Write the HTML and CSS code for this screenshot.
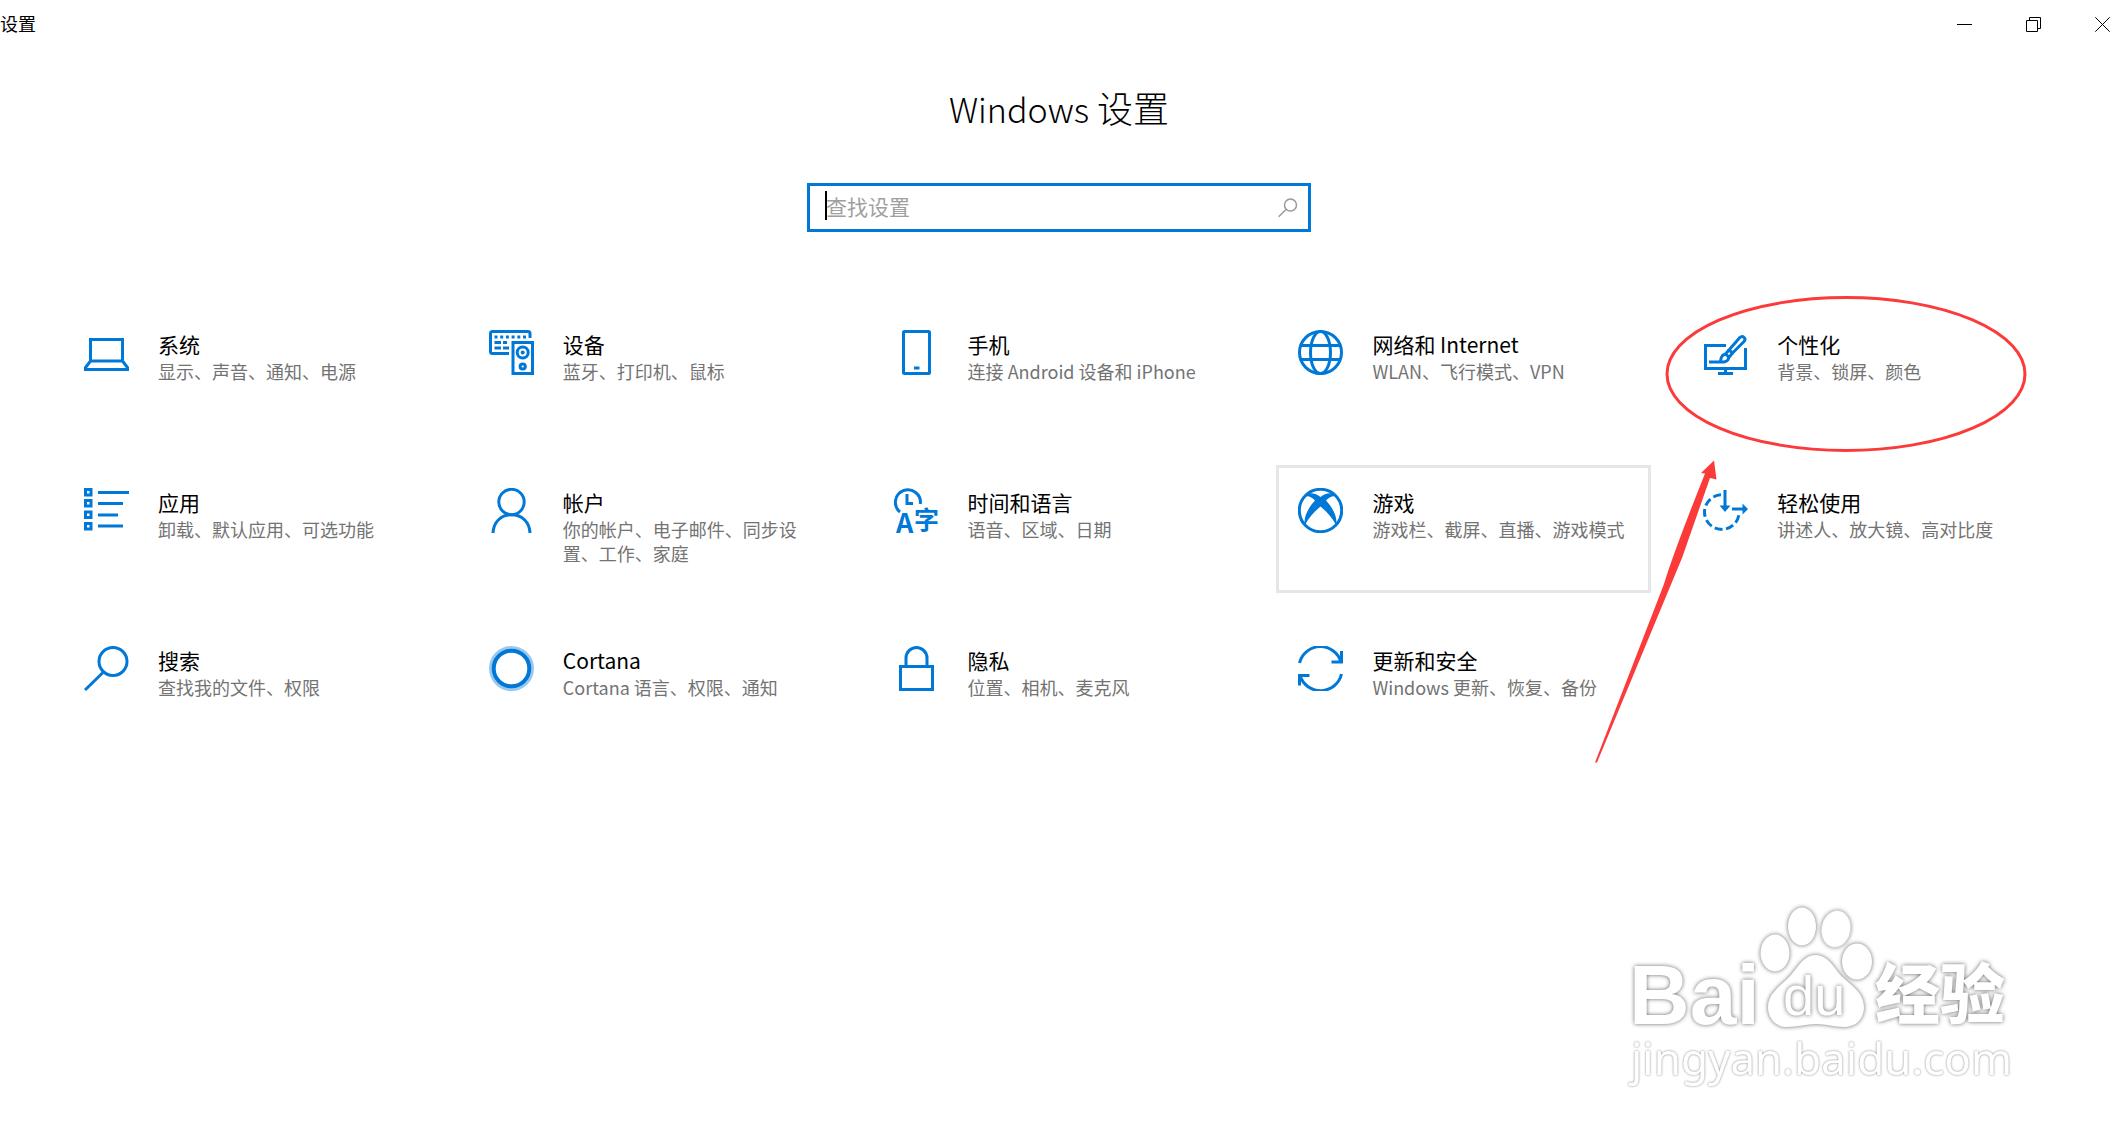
FILE: index.html
```html
<!DOCTYPE html>
<html lang="zh-CN">
<head>
<meta charset="utf-8">
<meta name="viewport" content="width=device-width, initial-scale=1">
<title>设置</title>
<link rel="stylesheet" href="styles.css">
</head>
<body>
<header class="titlebar">
  <span class="titlebar-name">设置</span>
  <div class="window-controls">
    <button type="button" aria-label="最小化"><svg viewBox="0 0 15 15"><path d="M0 7.500H15"/></svg></button>
    <button type="button" aria-label="还原"><svg viewBox="0 0 15 15"><path d="M.5 3.500H11.500V14.500H.5ZM3.500 3.500V.5H14.500V11.500H11.500"/></svg></button>
    <button type="button" aria-label="关闭"><svg viewBox="0 0 15 15"><path d="M.3.3 14.700 14.700M14.700.3.3 14.700"/></svg></button>
  </div>
</header>

<main class="settings">
  <h1 class="page-title"><span class="latin">Windows</span> 设置</h1>
  <form class="search" role="search">
    <input class="search-input" type="text" placeholder="查找设置" aria-label="查找设置">
    <span class="caret"></span>
    <button class="search-button" type="button" aria-label="搜索"><svg viewBox="0 0 20 20"><circle cx="12.500" cy="7" r="6"/><path d="M8 11.500.7 18.700"/></svg></button>
  </form>

  <nav class="tiles" aria-label="设置类别">
    <a class="tile" href="#system">
      <svg class="icon" viewBox="0 0 45 45"><path d="M6.500 30V9.500H38.500V30M6.500 31H38.500L43.500 37.500V39.500H1.500V37.500Z"/></svg>
      <span class="tile-text"><span class="tile-name">系统</span><span class="tile-desc">显示、声音、通知、电源</span></span>
    </a>
    <a class="tile" href="#devices">
      <svg class="icon" viewBox="0 0 45 45"><path d="M20 23.500H3.500Q1.500 23.500 1.500 21.500V3.500Q1.500 1.500 3.500 1.500H39Q41 1.500 41 3.500V8"/><path d="M5.500 7H37" stroke-dasharray="3 2.700"/><path d="M5.500 12.500H12M14 12.500H18M5.500 18H12M14 18H20"/><path d="M24 12.500H43.500V43.500H24Z"/><circle cx="33.700" cy="22.500" r="5.500"/><g class="solid"><circle cx="33.700" cy="22.500" r="2"/></g><circle cx="33.700" cy="36.500" r="2.600"/></svg>
      <span class="tile-text"><span class="tile-name">设备</span><span class="tile-desc">蓝牙、打印机、鼠标</span></span>
    </a>
    <a class="tile" href="#phone">
      <svg class="icon" viewBox="0 0 45 45"><rect x="9.500" y="1.500" width="26" height="42" rx="1"/><path d="M20 38H25.500"/></svg>
      <span class="tile-text"><span class="tile-name">手机</span><span class="tile-desc">连接 Android 设备和 iPhone</span></span>
    </a>
    <a class="tile" href="#network">
      <svg class="icon" viewBox="0 0 45 45"><circle cx="22.500" cy="22.500" r="21"/><ellipse cx="22.500" cy="22.500" rx="10" ry="21"/><path d="M3 15.500H42M3 29.500H42"/></svg>
      <span class="tile-text"><span class="tile-name">网络和 Internet</span><span class="tile-desc">WLAN、飞行模式、VPN</span></span>
    </a>
    <a class="tile" href="#personalization">
      <svg class="icon" viewBox="0 0 45 45"><path d="M23 15.500H2.500V38.500H42.500V18"/><path d="M22.500 38.500V43.500M15 43.500H30"/><path d="M26 20 36.800 7.600Q39 5.500 41 7.300 43 9 41 11.500L29.500 23Z"/><path d="M26 20 22 24.500M29.500 23 25.500 28"/><path d="M6 32H21Q26 31 25.500 27 23 23 19.500 25.500 18 27 17.500 31"/></svg>
      <span class="tile-text"><span class="tile-name">个性化</span><span class="tile-desc">背景、锁屏、颜色</span></span>
      <svg class="annotation" viewBox="0 0 438 474" aria-hidden="true"><ellipse cx="254" cy="82" rx="179" ry="76.500"/><path d="M122 168.500 109 181 113 181.500C96 224 80 266 72 292L3 470.500 5 470.500 90 266 118 186 124.500 187.500Z"/></svg>
    </a>
    <a class="tile" href="#apps">
      <svg class="icon" viewBox="0 0 45 45"><path d="M1.500 1.500H7V7H1.500ZM1.500 12.500H7V18H1.500ZM1.500 24H7V29.500H1.500ZM1.500 35.500H7V41H1.500Z"/><path d="M14 4.500H45M14 15.500H39M14 27H34M14 38H39"/></svg>
      <span class="tile-text"><span class="tile-name">应用</span><span class="tile-desc">卸载、默认应用、可选功能</span></span>
    </a>
    <a class="tile" href="#accounts">
      <svg class="icon" viewBox="0 0 45 45"><circle cx="22.500" cy="14" r="12.700"/><path d="M4 45C4.500 34 12 26.800 22.500 26.800S40.500 34 41 45"/></svg>
      <span class="tile-text"><span class="tile-name">帐户</span><span class="tile-desc">你的帐户、电子邮件、同步设置、工作、家庭</span></span>
    </a>
    <a class="tile" href="#time">
      <svg class="icon" viewBox="0 0 45 45"><path d="M6 24A12.500 12.500 0 1 1 26.300 16M13 6V15.500H19"/><text class="glyph" x="2" y="45" font-size="27">A</text><text class="glyph" x="20" y="41" font-size="25">字</text></svg>
      <span class="tile-text"><span class="tile-name">时间和语言</span><span class="tile-desc">语音、区域、日期</span></span>
    </a>
    <a class="tile tile-hover" href="#gaming">
      <svg class="icon" viewBox="0 0 45 45"><circle cx="22.500" cy="22.500" r="21.200"/><g class="solid"><path d="M9 6C13 4 19 6 22.500 9 26 6 32 4 36 6L38 8.500C34 7.500 31 9.500 28 12.500 35 20 40 30 38 37 34 29 28 23 22.500 18.500 17 23 11 29 7 37 5 30 10 20 17 12.500 14 9.500 11 7.500 7 8.500Z"/></g></svg>
      <span class="tile-text"><span class="tile-name">游戏</span><span class="tile-desc">游戏栏、截屏、直播、游戏模式</span></span>
    </a>
    <a class="tile" href="#ease">
      <svg class="icon" viewBox="0 0 45 45"><path d="M18 6.800A17.300 17.300 0 1 0 36 26" stroke-dasharray="8 3.500"/><path d="M22 2V18M29 21H40"/><g class="solid"><path d="M16.500 17.500H27.500L22 24ZM39.500 15.500 45 21 39.500 26.500Z"/></g></svg>
      <span class="tile-text"><span class="tile-name">轻松使用</span><span class="tile-desc">讲述人、放大镜、高对比度</span></span>
    </a>
    <a class="tile" href="#search">
      <svg class="icon" viewBox="0 0 45 45"><circle cx="29" cy="15.500" r="14"/><path d="M19.500 26 1 44"/></svg>
      <span class="tile-text"><span class="tile-name">搜索</span><span class="tile-desc">查找我的文件、权限</span></span>
    </a>
    <a class="tile" href="#cortana">
      <svg class="icon" viewBox="0 0 45 45"><circle class="halo" cx="22.500" cy="22.500" r="20.500"/><circle class="ring" cx="22.500" cy="22.500" r="17.800"/></svg>
      <span class="tile-text"><span class="tile-name">Cortana</span><span class="tile-desc">Cortana 语言、权限、通知</span></span>
    </a>
    <a class="tile" href="#privacy">
      <svg class="icon" viewBox="0 0 45 45"><path d="M6.500 20.500H38.500V43.500H6.500ZM12 20V12A10.500 10.500 0 0 1 33 12V20"/></svg>
      <span class="tile-text"><span class="tile-name">隐私</span><span class="tile-desc">位置、相机、麦克风</span></span>
    </a>
    <a class="tile" href="#update">
      <svg class="icon" viewBox="0 0 45 45"><path d="M1.500 17A21.500 21.500 0 0 1 43 16M43.500 5V16H33.500M43.500 28A21.500 21.500 0 0 1 2 29.500M1.500 39.500V29.500H11.500"/></svg>
      <span class="tile-text"><span class="tile-name">更新和安全</span><span class="tile-desc">Windows 更新、恢复、备份</span></span>
    </a>
  </nav>
</main>

<svg class="watermark" viewBox="0 0 400 190" role="img" aria-label="Baidu 经验">
  <text class="mark mark-latin" x="6" y="124" font-size="84">Bai</text>
  <ellipse class="mark" cx="152" cy="53" rx="14.500" ry="18.500"/>
  <ellipse class="mark" cx="179" cy="26.500" rx="14" ry="19"/>
  <ellipse class="mark" cx="213" cy="29" rx="14.500" ry="18.500" transform="rotate(10 213 29)"/>
  <ellipse class="mark" cx="234" cy="61.500" rx="15" ry="18"/>
  <path class="mark" d="M192 55C202 55 208 62 215 72 223 83 241 90 241 107 241 120 232 127 221 127 210 127 204 124 193 124 183 124 176 127 164 127 152 127 145 118 145 107 145 93 158 86 168 75 176 65 182 55 192 55Z"/>
  <text class="mark mark-du" x="160" y="115" font-size="56">du</text>
  <text class="mark mark-cjk" x="252" y="118" font-size="65">经验</text>
  <text class="mark mark-url" x="8" y="175" font-size="44">jingyan.baidu.com</text>
</svg>
</body>
</html>
```
FILE: styles.css
```css
* {
  box-sizing: border-box;
}

body {
  margin: 0;
  position: relative;
  min-height: 100vh;
  overflow-x: hidden;
  background: #fff;
  color: #000;
  font-family: "Noto Sans CJK SC", sans-serif;
  font-weight: 400;
}

.titlebar {
  display: flex;
  align-items: center;
  justify-content: space-between;
  height: 49px;
  padding-right: 15px;
}

.titlebar-name {
  padding-bottom: 3px;
  font-size: 18px;
  line-height: 24px;
}

.window-controls {
  display: flex;
  gap: 54px;
}

button {
  padding: 0;
  border: 0;
  background: none;
}

.window-controls svg {
  display: block;
  width: 15px;
  height: 15px;
  fill: none;
  stroke: #000;
}

.settings {
  padding: 30px 69px 60px 62px;
}

.page-title {
  margin: 0 0 48px;
  text-align: center;
  font-size: 36px;
  font-weight: 300;
  line-height: 56px;
}

.page-title .latin {
  font-size: 34px;
  line-height: 1;
}

.search {
  position: relative;
  display: flex;
  align-items: center;
  width: 504px;
  height: 49px;
  margin: 0 auto 75px;
  padding: 0 10px 0 16px;
  border: 3px solid #0078d7;
}

.search-input {
  flex: 1;
  min-width: 0;
  padding: 0 0 4px;
  border: 0;
  outline: 0;
  background: none;
  color: #000;
  font: inherit;
  font-size: 21px;
  line-height: 28px;
}

.search-input::placeholder {
  color: #a0a0a0;
  opacity: 1;
}

.caret {
  position: absolute;
  left: 15px;
  top: 5px;
  width: 2px;
  height: 29px;
  background: #000;
}

.search-button svg {
  display: block;
  width: 20px;
  height: 20px;
  fill: none;
  stroke: #999;
  stroke-width: 1.5;
}

.tiles {
  display: grid;
  grid-template-columns: repeat(5, 1fr);
  grid-auto-rows: minmax(128px, auto);
  gap: 30px;
}

.tile {
  position: relative;
  display: flex;
  align-items: flex-start;
  gap: 29px;
  padding: 20px 19px;
  border: 3px solid transparent;
  color: inherit;
  text-decoration: none;
}

.tile-hover {
  border-color: #e6e6e6;
}

.icon {
  flex: none;
  width: 45px;
  height: 45px;
  fill: none;
  stroke: #0078d7;
  stroke-width: 3;
}

.icon .solid,
.icon .glyph {
  fill: #0078d7;
  stroke: none;
}

.glyph {
  font-family: "Noto Sans CJK SC", sans-serif;
  font-weight: 700;
}

.icon .halo {
  stroke: #99c9ef;
  stroke-width: 4;
}

.icon .ring {
  stroke-width: 4;
}

.tile-text {
  display: flex;
  flex-direction: column;
  gap: 1px;
  min-width: 0;
}

.tile-name {
  font-size: 21px;
  line-height: 28px;
}

.tile-desc {
  color: #737373;
  font-size: 18px;
  line-height: 24px;
}

.annotation {
  position: absolute;
  left: -92px;
  top: -18px;
  width: 438px;
  height: 474px;
  z-index: 1;
  pointer-events: none;
}

.annotation ellipse {
  fill: none;
  stroke: #fc3a3a;
  stroke-width: 3;
}

.annotation path {
  fill: #fc3a3a;
}

.watermark {
  position: absolute;
  right: 102px;
  bottom: 43px;
  width: 400px;
  height: 190px;
}

.mark {
  fill: #fff;
  filter: drop-shadow(0 0 2px #666);
}

.mark-latin {
  font-family: "Liberation Sans", sans-serif;
  font-weight: 700;
}

.mark-du {
  font-family: "Liberation Sans", sans-serif;
  font-weight: 400;
}

.mark-cjk {
  font-family: "Noto Sans CJK SC", sans-serif;
  font-weight: 900;
}

.mark-url {
  font-family: "Noto Sans", sans-serif;
  font-weight: 400;
  filter: drop-shadow(0 0 1px #888);
}
```
